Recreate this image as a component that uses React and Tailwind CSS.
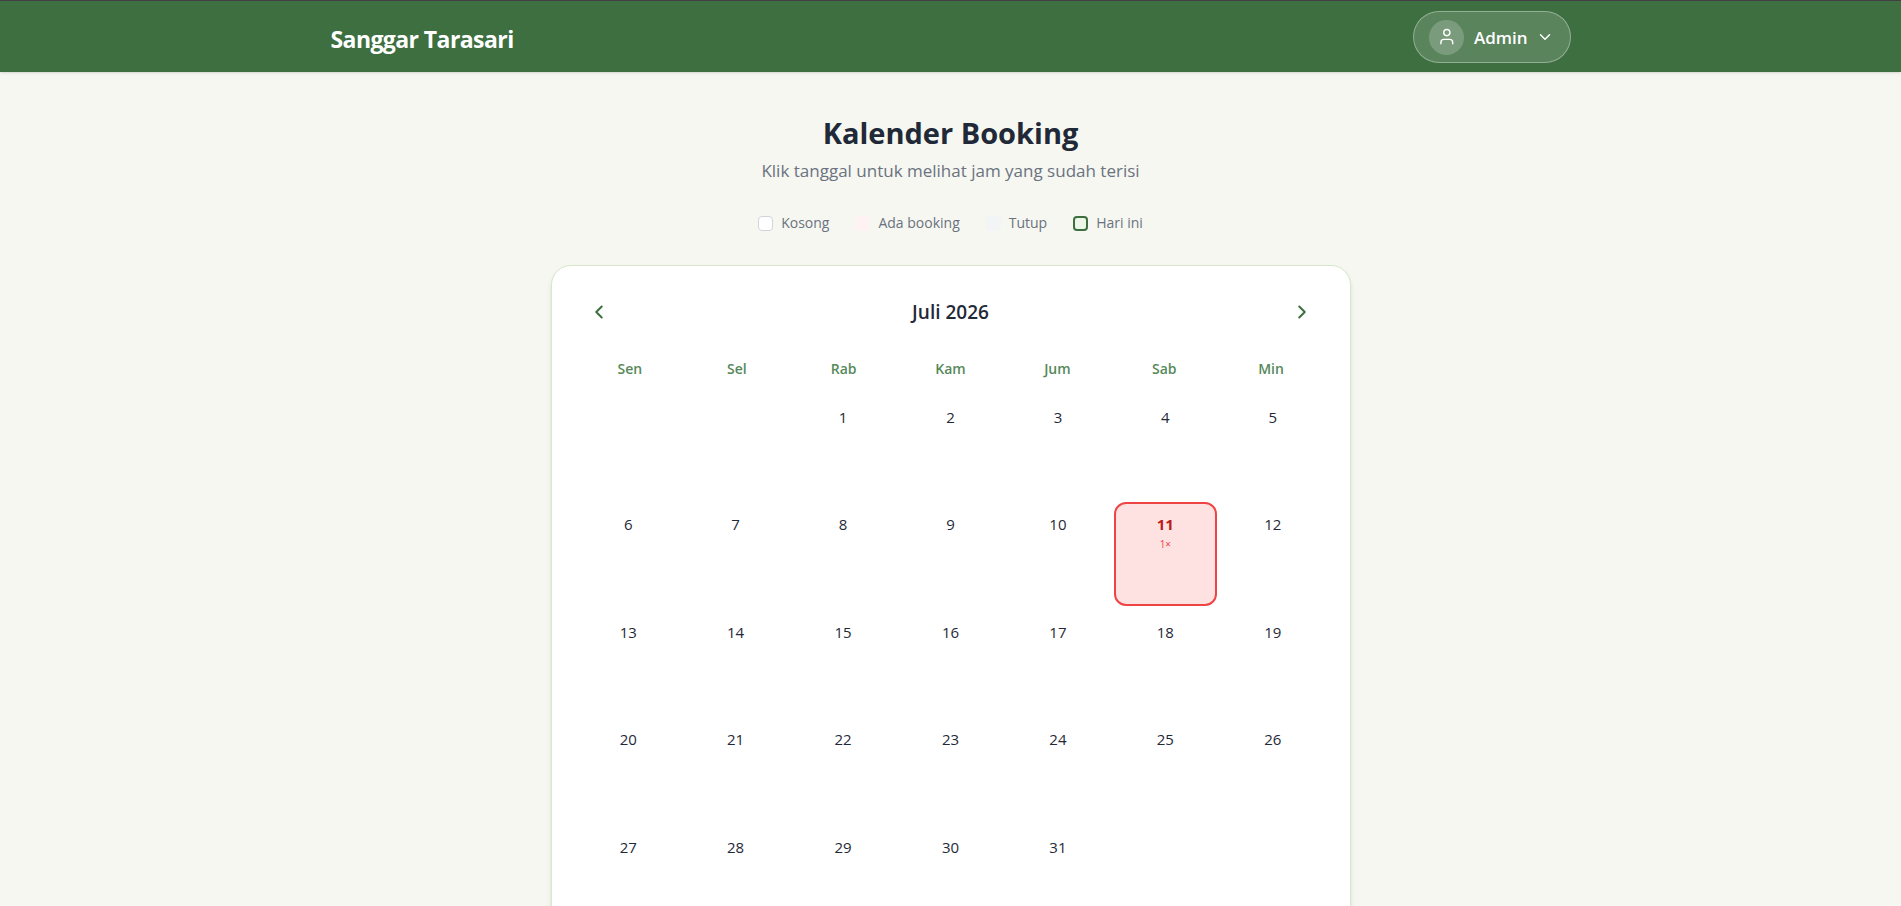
import React from "react";
import { ChevronDown, ChevronLeft, ChevronRight } from "lucide-react";

const weekdays = ["Sen", "Sel", "Rab", "Kam", "Jum", "Sab", "Min"];
const days = Array.from({ length: 31 }, (_, i) => i + 1);
const bookings = { 11: 1 };

const legend = [
  { label: "Kosong", swatch: "border border-[#d1d5db] bg-white" },
  { label: "Ada booking", swatch: "bg-[#fef2f2]" },
  { label: "Tutup", swatch: "bg-[#f3f4f6]" },
  { label: "Hari ini", swatch: "border-2 border-[#3d6f40] bg-[#edf7e8]" },
];

function UserIcon() {
  return (
    <svg
      className="size-5"
      viewBox="0 0 20 20"
      fill="none"
      stroke="currentColor"
      strokeWidth="1.4"
      strokeLinecap="round"
      strokeLinejoin="round"
      aria-hidden="true"
    >
      <circle cx="10.8" cy="5.6" r="3.1" />
      <path d="M4.9 16.8v-1.4a3 3 0 0 1 3-3h5.8a3 3 0 0 1 3 3v1.4" />
    </svg>
  );
}

function Header() {
  return (
    <header className="border-t border-[#423f47] bg-[#3d6f40] shadow">
      <div className="mx-auto flex h-[71px] max-w-7xl items-center justify-between px-5 pt-px">
        <a href="#" className="pt-1 text-[23px] font-bold tracking-tight text-white">
          Sanggar Tarasari
        </a>
        <button
          type="button"
          className="flex h-[52px] items-center rounded-full border border-white/35 bg-white/15 pr-4 pl-[15px] text-white"
        >
          <span className="flex size-[35px] items-center justify-center rounded-full bg-white/20">
            <UserIcon />
          </span>
          <span className="ml-2.5 pt-0.5 text-[17px] font-semibold">Admin</span>
          <ChevronDown className="ml-2 size-[18px]" strokeWidth={2} aria-hidden="true" />
        </button>
      </div>
    </header>
  );
}

function Day({ day }) {
  const count = bookings[day];
  const base = "flex aspect-square flex-col items-center rounded-xl border-2 pt-2 text-[15px] leading-6";
  if (count) {
    return (
      <button type="button" className={`${base} border-[#ef4444] bg-[#fee2e2] font-bold text-[#b91c1c]`}>
        {day}
        <span className="text-[10px] leading-4 font-normal text-[#ef4444]">{count}×</span>
      </button>
    );
  }
  return (
    <button type="button" className={`${base} border-transparent text-[#1f2937]`}>
      {day}
    </button>
  );
}

function Calendar() {
  return (
    <section className="mt-8 rounded-[20px] border border-[#d5e8c8] bg-white px-[25px] py-6 shadow-md">
      <div className="flex h-11 items-center justify-between">
        <button type="button" aria-label="Bulan sebelumnya" className="flex size-11 items-center justify-center text-[#3d6f40]">
          <ChevronLeft className="size-[22px]" strokeWidth={2.2} />
        </button>
        <h2 className="text-[19px] font-semibold text-[#1f2937]">Juli 2026</h2>
        <button type="button" aria-label="Bulan berikutnya" className="flex size-11 items-center justify-center text-[#3d6f40]">
          <ChevronRight className="size-[22px]" strokeWidth={2.2} />
        </button>
      </div>
      <div className="mt-[25px] grid grid-cols-7 text-center text-sm leading-5 font-semibold text-[#56895a]">
        {weekdays.map((name) => (
          <div key={name}>{name}</div>
        ))}
      </div>
      <div className="mt-4 grid grid-cols-7 gap-1">
        <div className="col-span-2" />
        {days.map((day) => (
          <Day key={day} day={day} />
        ))}
      </div>
    </section>
  );
}

export default function App() {
  return (
    <div className="min-h-screen bg-[#f6f7f1] font-['Segoe_UI','Open_Sans','Noto_Sans',sans-serif]">
      <Header />
      <main className="mx-auto max-w-[800px] pt-10 pb-10">
        <div className="text-center">
          <h1 className="text-[29px] leading-[42px] font-bold text-[#1f2937]">Kalender Booking</h1>
          <p className="mt-[3px] text-[17px] leading-7 text-[#6b7280]">
            Klik tanggal untuk melihat jam yang sudah terisi
          </p>
        </div>
        <ul className="mt-7 flex flex-wrap justify-center gap-[26px] text-sm leading-5 text-[#6b7280]">
          {legend.map((item) => (
            <li key={item.label} className="flex items-center gap-2">
              <span className={`size-[15px] rounded ${item.swatch}`} />
              {item.label}
            </li>
          ))}
        </ul>
        <Calendar />
      </main>
    </div>
  );
}
